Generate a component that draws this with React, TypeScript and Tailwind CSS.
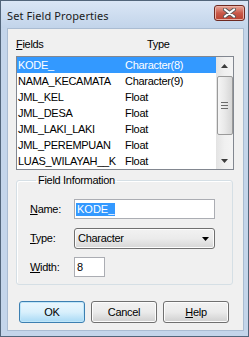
const fields = [
  { name: "KODE_", type: "Character(8)" },
  { name: "NAMA_KECAMATA", type: "Character(9)" },
  { name: "JML_KEL", type: "Float" },
  { name: "JML_DESA", type: "Float" },
  { name: "JML_LAKI_LAKI", type: "Float" },
  { name: "JML_PEREMPUAN", type: "Float" },
  { name: "LUAS_WILAYAH__K", type: "Float" },
];

const Btn = ({ children, primary }: { children: React.ReactNode; primary?: boolean }) => (
  <div
    className={
      "w-[66px] h-[22px] rounded-[3px] border flex items-center justify-center " +
      (primary
        ? "border-[#3c7fb1] bg-gradient-to-b from-[#eaf6fd] via-[#d9f0fc] to-[#a7d9f5] shadow-[inset_0_0_0_1px_#bfe6f9]"
        : "border-[#707070] bg-gradient-to-b from-[#f2f2f2] via-[#ebebeb] to-[#cfcfcf] shadow-[inset_0_0_0_1px_#fcfcfc]")
    }
  >
    {children}
  </div>
);

export default function App() {
  return (
    <div className="w-[249px] h-[337px] border border-[#52657a] bg-[#c4d5ea] flex flex-col font-['Liberation_Sans',Arial,sans-serif] text-[11px] leading-[13px] tracking-[-0.3px] text-black">
      {/* TITLE BAR */}
      <div className="h-[27px] flex items-start justify-between pl-[6px] pr-[3px] bg-gradient-to-b from-[#dae6f5] to-[#c2d4ea]">
        <span className="mt-[7px] text-[11px] leading-[15px] tracking-[0.1px] text-[#1a1a1a] font-['Noto_Sans',sans-serif]">
          Set Field Properties
        </span>
        <div className="mt-[4px] w-[31px] h-[16px] rounded-[3px] border border-[#6e2a22] bg-gradient-to-b from-[#e7a89c] via-[#c95a4a] to-[#b8402f] flex items-center justify-center shadow-[inset_0_0_0_1px_#e9b3a8]">
          <svg width="13" height="10" viewBox="0 0 13 10">
            <path d="M2 1.5 L11 8.5 M11 1.5 L2 8.5" stroke="#5a5a5a" strokeWidth="4" strokeLinecap="round" />
            <path d="M2 1.5 L11 8.5 M11 1.5 L2 8.5" stroke="#ffffff" strokeWidth="2.2" strokeLinecap="round" />
          </svg>
        </div>
      </div>

      {/* BODY */}
      <div className="flex-1 ml-[6px] mr-[4px] mb-[5px] bg-[#f0f0f0] border border-[#aabcd2] px-[8px] pt-[9px]">
        {/* HEADER */}
        <div className="flex h-[13px]">
          <span className="w-[131px]">
            <u className="underline underline-offset-[1px]">F</u>ields
          </span>
          <span>Type</span>
        </div>

        {/* LIST */}
        <div className="mt-[5px] w-[218px] h-[114px] border border-[#828790] bg-white flex">
          <div className="w-[199px] flex flex-col">
            {fields.map((f, i) => (
              <div
                key={f.name}
                className={"h-[16px] flex items-center " + (i === 0 ? "bg-[#3399ff] text-white" : "")}
              >
                <span className="w-[108px] pl-[1px] whitespace-nowrap">{f.name}</span>
                <span>{f.type}</span>
              </div>
            ))}
          </div>
          {/* SCROLLBAR */}
          <div className="w-[17px] bg-gradient-to-r from-[#e3e3e3] via-[#f0f0f0] to-[#f4f4f4] flex flex-col items-center">
            <div className="h-[17px] flex items-center justify-center">
              <svg width="7" height="4" viewBox="0 0 7 4">
                <path d="M3.5 0 L7 4 L0 4 Z" fill="#3c3c3c" />
              </svg>
            </div>
            <div className="mt-[2px] w-[16px] h-[59px] rounded-[2px] border border-[#9a9a9a] bg-gradient-to-r from-[#f5f5f5] via-[#e8e8e8] to-[#d6d6d6] flex flex-col items-center justify-center gap-[2px]">
              <div className="w-[7px] h-[1px] bg-[#6b6b6b]" />
              <div className="w-[7px] h-[1px] bg-[#6b6b6b]" />
              <div className="w-[7px] h-[1px] bg-[#6b6b6b]" />
            </div>
            <div className="mt-auto h-[17px] flex items-center justify-center">
              <svg width="7" height="4" viewBox="0 0 7 4">
                <path d="M0 0 L7 0 L3.5 4 Z" fill="#3c3c3c" />
              </svg>
            </div>
          </div>
        </div>

        {/* FIELD INFORMATION */}
        <fieldset className="mt-[4px] w-[217px] border border-[#d5dfe5] rounded-[3px] pl-[13px] pb-[7px] shadow-[inset_1px_1px_0_#ffffff]">
          <legend className="ml-[6px] px-[2px] h-[13px]">Field Information</legend>
          <div className="mt-[12px] flex items-center h-[20px]">
            <span className="w-[44px]">
              <u className="underline underline-offset-[1px]">N</u>ame:
            </span>
            <div className="w-[141px] h-[20px] border border-[#abadb3] bg-white flex items-center pl-[1px]">
              <span className="bg-[#3399ff] text-white px-[1px] h-[13px] tracking-[0px]">KODE_</span>
            </div>
          </div>
          <div className="mt-[9px] flex items-center h-[21px]">
            <span className="w-[44px]">
              <u className="underline underline-offset-[1px]">T</u>ype:
            </span>
            <div className="w-[141px] h-[21px] rounded-[3px] border border-[#707070] bg-gradient-to-b from-[#f2f2f2] via-[#ebebeb] to-[#d6d6d6] flex items-center justify-between pl-[3px] pr-[5px] shadow-[inset_0_0_0_1px_#fcfcfc]">
              <span>Character</span>
              <svg width="7" height="4" viewBox="0 0 7 4">
                <path d="M0 0 L7 0 L3.5 4 Z" fill="#000000" />
              </svg>
            </div>
          </div>
          <div className="mt-[8px] flex items-center h-[20px]">
            <span className="w-[44px]">
              <u className="underline underline-offset-[1px]">W</u>idth:
            </span>
            <div className="w-[31px] h-[20px] border border-[#abadb3] bg-white flex items-center pl-[2px]">
              8
            </div>
          </div>
        </fieldset>

        {/* BUTTONS */}
        <div className="mt-[16px] ml-[3px] flex gap-[6px]">
          <Btn primary>OK</Btn>
          <Btn>Cancel</Btn>
          <Btn>
            <span>
              <u className="underline underline-offset-[1px]">H</u>elp
            </span>
          </Btn>
        </div>
      </div>
    </div>
  );
}
